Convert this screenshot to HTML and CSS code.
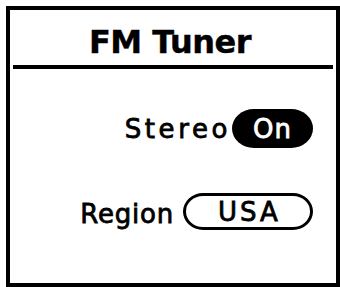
FILE: index.html
```html
<!DOCTYPE html>
<html>
<head>
<meta charset="utf-8">
<link rel="stylesheet" href="styles.css">
</head>
<body>
<div class="frame">
  <div class="header"><span class="title">FM Tuner</span></div>
  <div class="divider"></div>
  <div class="row row-stereo">
    <span class="label label-stereo">Stereo</span>
    <span class="pill pill-on">On</span>
  </div>
  <div class="row row-region">
    <span class="label label-region">Region</span>
    <span class="pill pill-outline">USA</span>
  </div>
</div>
</body>
</html>
```
FILE: styles.css
```css
html, body {
  margin: 0;
  padding: 0;
  background: #fff;
}
body {
  width: 340px;
  height: 287px;
  overflow: hidden;
  font-family: "DejaVu Sans", sans-serif;
  color: #000;
}
.frame {
  margin: 6px 0 0 6px;
  width: 326px;
  height: 273px;
  border: 4px solid #000;
}
.header {
  height: 39px;
  padding-top: 16px;
  display: flex;
  justify-content: center;
}
.title {
  font-weight: bold;
  font-size: 32px;
  line-height: 32px;
  letter-spacing: -0.5px;
  margin-left: -6px;
  -webkit-text-stroke: 0.4px #000;
}
.divider {
  height: 4px;
  margin: 0 3px;
  background: #000;
}
.row {
  display: flex;
  justify-content: flex-end;
  align-items: center;
  padding-right: 23px;
}
.row-stereo {
  margin-top: 40px;
  height: 39px;
}
.row-region {
  margin-top: 45px;
  height: 37px;
}
.label {
  font-size: 26px;
  line-height: 30px;
  -webkit-text-stroke: 0.8px #000;
}
.label-stereo {
  letter-spacing: 3.6px;
  margin-right: 1px;
}
.label-region {
  letter-spacing: 0.8px;
  margin-right: 9px;
  position: relative;
  top: 2px;
}
.pill {
  box-sizing: border-box;
  display: flex;
  align-items: center;
  justify-content: center;
  font-size: 26px;
  line-height: 30px;
}
.pill-on {
  width: 81px;
  height: 39px;
  background: #000;
  color: #fff;
  border-radius: 22px / 50%;
  letter-spacing: 1px;
  -webkit-text-stroke: 0.8px #fff;
}
.pill-outline {
  width: 130px;
  height: 37px;
  border: 3px solid #000;
  border-radius: 20px / 50%;
  letter-spacing: 3px;
  padding-left: 3px;
  -webkit-text-stroke: 0.8px #000;
}
```
